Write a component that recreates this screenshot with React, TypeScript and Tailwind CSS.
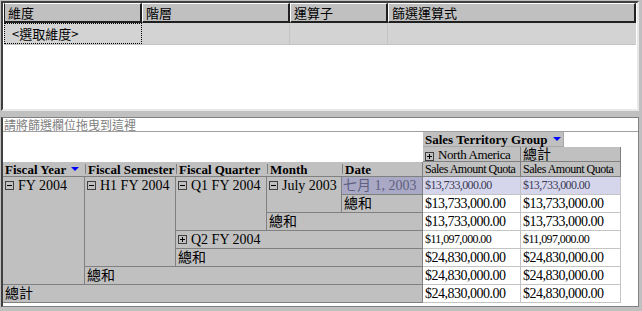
import React from "react";

const serif = "font-['Liberation_Serif','Noto_Sans_CJK_TC',serif]";
const cjk = "font-['Noto_Sans_CJK_TC','Liberation_Sans',sans-serif]";

const rowHead = `${serif} bg-[#c0c0c0] border-r border-b border-[#808080] flex items-start pl-[2px] text-[14px] leading-[17px] text-black whitespace-nowrap overflow-hidden`;
const fieldHead = `${serif} bg-[#c0c0c0] border-b border-[#808080] flex items-center text-[13px] leading-[15px] font-bold text-black whitespace-nowrap overflow-hidden`;
const colHead = `${serif} bg-[#c0c0c0] border-r border-b border-[#808080] flex items-center pl-[2px] text-black whitespace-nowrap overflow-hidden`;

function Toggle({ open }: { open: boolean }) {
  return (
    <svg width="9" height="9" viewBox="0 0 9 9" className="mr-[4px] mt-[4px] shrink-0">
      <rect x="0.5" y="0.5" width="8" height="8" fill="none" stroke="#404040" />
      <line x1="2" y1="4.5" x2="7" y2="4.5" stroke="#000" />
      {!open && <line x1="4.5" y1="2" x2="4.5" y2="7" stroke="#000" />}
    </svg>
  );
}

function Arrow() {
  return (
    <svg width="8" height="5" viewBox="0 0 8 5" className="ml-[5px] shrink-0">
      <polygon points="0,0 8,0 4,4" fill="#0000ff" />
    </svg>
  );
}

function Sep() {
  return <span className="w-px h-[10px] bg-[#808080] mr-[2px] shrink-0" />;
}

const values = [
  { v: "$13,733,000.00", small: true, hl: true, row: "row-start-4" },
  { v: "$13,733,000.00", small: false, hl: false, row: "row-start-5" },
  { v: "$13,733,000.00", small: false, hl: false, row: "row-start-6" },
  { v: "$11,097,000.00", small: true, hl: false, row: "row-start-7" },
  { v: "$24,830,000.00", small: false, hl: false, row: "row-start-8" },
  { v: "$24,830,000.00", small: false, hl: false, row: "row-start-9" },
  { v: "$24,830,000.00", small: false, hl: false, row: "row-start-10" },
];

function ValueCell({ v, small, hl, row, col }: { v: string; small: boolean; hl: boolean; row: string; col: string }) {
  const tone = hl ? "bg-[#d5d5eb] text-[#3a3a55]" : "bg-white text-black";
  const size = small
    ? "text-[12px] leading-[13px] tracking-[-0.6px] pt-[2px] items-start"
    : "text-[14px] leading-[17px] tracking-[-0.5px] items-center";
  return (
    <div className={`${serif} ${tone} ${size} ${row} ${col} flex border-r border-b border-[#c4c4c4] pl-[2px] whitespace-nowrap overflow-hidden`}>
      {v}
    </div>
  );
}

export default function App() {
  return (
    <div className="w-[642px] h-[311px] bg-[#c0c0c0] pl-px pt-px overflow-hidden">
      {/* filter panel */}
      <div className="w-[638px] h-[110px] bg-white border-t-2 border-l-2 border-[#404040] border-r-2 border-b-2 border-r-[#e8e8e8] border-b-[#e8e8e8]">
        <div className={`${cjk} ml-px flex h-[20px] text-[13px] leading-[16px] text-black`}>
          <div className="w-[138px] bg-[#c0c0c0] border-t border-l border-t-white border-l-[#202020] border-r-2 border-b-2 border-r-[#202020] border-b-[#202020] pl-[3px] flex items-center">維度</div>
          <div className="w-[148px] bg-[#c0c0c0] border-t border-l border-white border-r-2 border-b-2 border-r-[#202020] border-b-[#202020] pl-[3px] flex items-center">階層</div>
          <div className="w-[98px] bg-[#c0c0c0] border-t border-l border-white border-r-2 border-b-2 border-r-[#202020] border-b-[#202020] pl-[3px] flex items-center">運算子</div>
          <div className="w-[248px] bg-[#c0c0c0] border-t border-l border-white border-r-2 border-b-2 border-r-[#202020] border-b-[#202020] pl-[3px] flex items-center">篩選運算式</div>
        </div>
        <div className={`${cjk} ml-px flex h-[22px] bg-[#d3d3d3] border-b border-[#c4c4c4] w-[632px] text-[13px] leading-[16px] text-black`}>
          <div className="w-[138px] border border-dotted border-black pl-[7px] flex items-center">&lt;選取維度&gt;</div>
          <div className="w-[148px] border-r border-[#c4c4c4]" />
          <div className="w-[98px] border-r border-[#c4c4c4]" />
          <div className="flex-1" />
        </div>
      </div>

      <div className="h-[6px]" />

      {/* pivot panel */}
      <div className="w-[638px] h-[190px] bg-white border-l-2 border-l-[#404040] border-t border-t-[#808080] border-r border-r-[#808080] border-b border-b-[#808080]">
        <div className={`${cjk} h-[14px] border-b border-[#a0a0a0] text-[12px] leading-[13px] text-[#808080] pl-px`}>
          請將篩選欄位拖曳到這裡
        </div>

        <div className="grid grid-cols-[82px_91px_91px_75px_81px_98px_100px] grid-rows-[15px_15px_15px_repeat(7,18px)]">
          {/* column area */}
          <div className="col-start-6 col-span-2 row-start-1 flex">
            <div className={`${serif} w-[141px] bg-[#c0c0c0] border-r border-b border-[#a8a8a8] flex items-center pl-[2px] text-[13px] leading-[15px] font-bold text-black whitespace-nowrap`}>
              Sales Territory Group
              <Arrow />
            </div>
          </div>
          <div className={`${colHead} col-start-6 row-start-2 text-[13px] leading-[15px] tracking-[-0.4px]`}>
            <Toggle open={false} />
            <span>North America</span>
          </div>
          <div className={`${colHead} col-start-7 row-start-2 text-[14px] leading-[15px]`}>總計</div>

          {/* field headers */}
          <div className={`${fieldHead} col-start-1 row-start-3 pl-[2px]`}>
            Fiscal Year
            <Arrow />
          </div>
          <div className={`${fieldHead} col-start-2 row-start-3`}>
            <Sep />
            Fiscal Semester
          </div>
          <div className={`${fieldHead} col-start-3 row-start-3`}>
            <Sep />
            Fiscal Quarter
          </div>
          <div className={`${fieldHead} col-start-4 row-start-3`}>
            <Sep />
            Month
          </div>
          <div className={`${fieldHead} col-start-5 row-start-3 border-r`}>
            <Sep />
            Date
          </div>
          <div className={`${colHead} col-start-6 row-start-3 text-[12px] leading-[15px] tracking-[-0.5px]`}>Sales Amount Quota</div>
          <div className={`${colHead} col-start-7 row-start-3 text-[12px] leading-[15px] tracking-[-0.5px]`}>Sales Amount Quota</div>

          {/* row headers */}
          <div className={`${rowHead} col-start-1 row-start-4 row-span-6`}>
            <Toggle open />
            FY 2004
          </div>
          <div className={`${rowHead} col-start-2 row-start-4 row-span-5`}>
            <Toggle open />
            H1 FY 2004
          </div>
          <div className={`${rowHead} col-start-3 row-start-4 row-span-3`}>
            <Toggle open />
            Q1 FY 2004
          </div>
          <div className={`${rowHead} col-start-4 row-start-4 row-span-2`}>
            <Toggle open />
            July 2003
          </div>
          <div className={`${serif} col-start-5 row-start-4 bg-[#a9a9c5] text-[#5f5f80] border-r border-b border-[#808080] pl-px text-[14px] leading-[17px] whitespace-nowrap overflow-hidden`}>
            七月 1, 2003
          </div>
          <div className={`${rowHead} col-start-5 row-start-5`}>總和</div>
          <div className={`${rowHead} col-start-4 col-span-2 row-start-6`}>總和</div>
          <div className={`${rowHead} col-start-3 col-span-3 row-start-7`}>
            <Toggle open={false} />
            Q2 FY 2004
          </div>
          <div className={`${rowHead} col-start-3 col-span-3 row-start-8`}>總和</div>
          <div className={`${rowHead} col-start-2 col-span-4 row-start-9`}>總和</div>
          <div className={`${rowHead} col-start-1 col-span-5 row-start-10`}>總計</div>

          {/* values */}
          {values.map((item) => (
            <React.Fragment key={item.row}>
              <ValueCell {...item} col="col-start-6" />
              <ValueCell {...item} col="col-start-7" />
            </React.Fragment>
          ))}
        </div>
      </div>
    </div>
  );
}
